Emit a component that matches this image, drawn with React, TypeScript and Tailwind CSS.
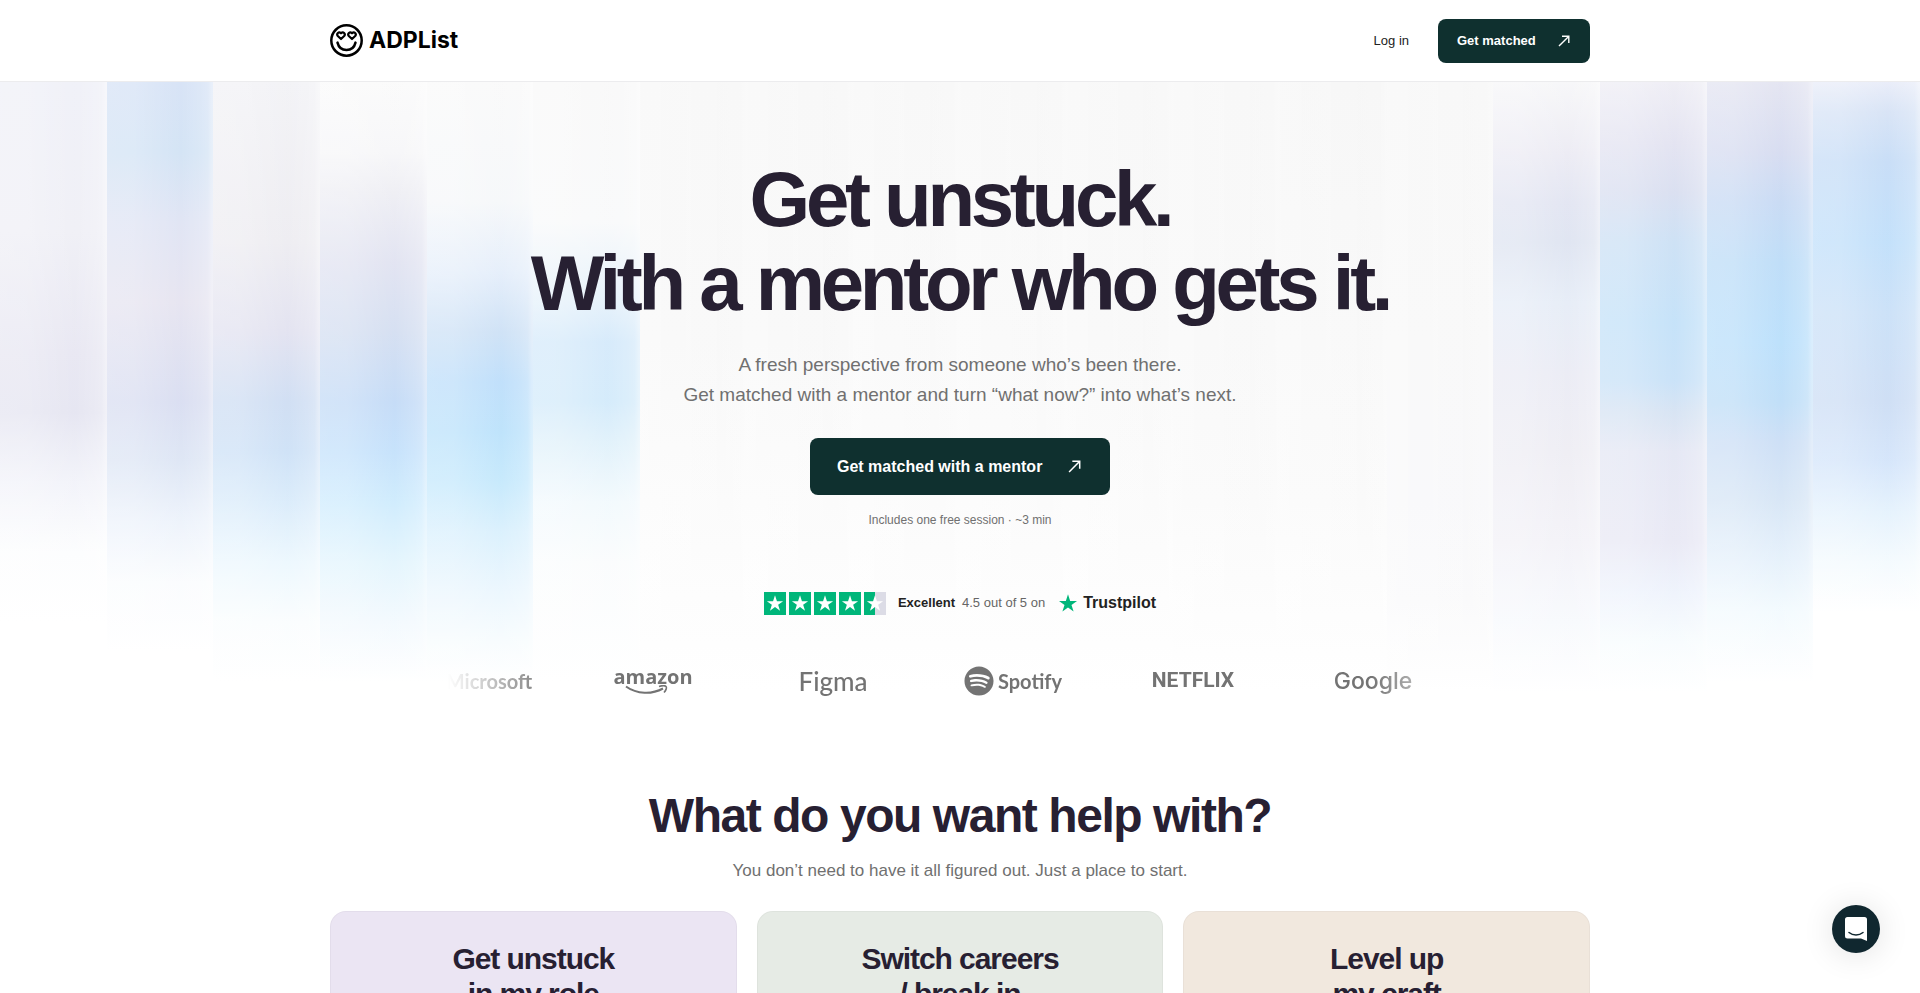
import React from "react";
import { FaSpotify } from "react-icons/fa";
import { clsx } from "clsx";

const STAR_PATH = "M12 1.6l2.6 7.9h8.2l-6.6 4.8 2.5 7.9L12 17.3l-6.7 4.9 2.5-7.9-6.6-4.8h8.2z";

// One gradient per strip, left to right
const strips = [
  "bg-[linear-gradient(to_bottom,#eeeff7_0px,#eeeef5_150px,#e6e5f1_270px,#e3e3f0_330px,#f1f2f9_400px,#fcfdfe_470px,#ffffff_540px)]",
  "bg-[linear-gradient(to_bottom,#d3e0f5_0px,#cfe1f4_70px,#dde2f3_140px,#e4e2ef_220px,#d6dbf0_320px,#dbe4f4_380px,#ecf2fb_440px,#fafcfe_500px,#ffffff_570px)]",
  "bg-[linear-gradient(to_bottom,#f1f1f5_0px,#ecebf0_160px,#e0e0ef_250px,#cbdbf2_320px,#cadff6_370px,#d7eafa_420px,#ebf7fe_480px,#fafdfe_540px,#ffffff_600px)]",
  "bg-[linear-gradient(to_bottom,#fafafa_0px,#f6f6f8_70px,#ededf3_110px,#dfe1f0_180px,#d1dcf0_250px,#bfd8f6_320px,#c0dffb_370px,#cbeafd_420px,#e1f4fd_480px,#f2f9fe_540px,#ffffff_600px)]",
  "bg-[linear-gradient(to_bottom,#f9f9f9_0px,#f5f7f9_120px,#e3edfa_190px,#cadff5_250px,#b9dcfa_300px,#b7e0fb_350px,#c1e7fc_400px,#d7effd_450px,#eaf6fe_510px,#f7fcfe_560px,#ffffff_600px)]",
  "bg-[linear-gradient(to_bottom,#f8f8f8_0px,#f8f9fa_140px,#e3f0fa_220px,#d2e8fa_260px,#d0e9fa_320px,#def0fa_360px,#f1f9fd_420px,#fafcfd_480px,#ffffff_600px)]",
  "bg-[linear-gradient(to_bottom,#f7f7f7_0px,#f8f8f8_260px,#fbfbfb_420px,#ffffff_610px)]",
  "bg-[linear-gradient(to_bottom,#f7f7f7_0px,#f8f8f8_260px,#fbfbfb_420px,#ffffff_610px)]",
  "bg-[linear-gradient(to_bottom,#f7f7f7_0px,#f9f9f9_260px,#fbfbfb_420px,#ffffff_610px)]",
  "bg-[linear-gradient(to_bottom,#f7f7f7_0px,#f9f9f9_260px,#fbfbfb_420px,#ffffff_610px)]",
  "bg-[linear-gradient(to_bottom,#f7f7f7_0px,#f8f8f8_260px,#fbfbfb_420px,#ffffff_610px)]",
  "bg-[linear-gradient(to_bottom,#f7f7f7_0px,#f8f8f8_260px,#fafafa_420px,#ffffff_610px)]",
  "bg-[linear-gradient(to_bottom,#f6f6f6_0px,#f8f8f8_260px,#fafafa_420px,#ffffff_610px)]",
  "bg-[linear-gradient(to_bottom,#f7f7f7_0px,#f8f8f8_260px,#f8f8fa_420px,#fafafb_520px,#ffffff_610px)]",
  "bg-[linear-gradient(to_bottom,#f6f6f8_0px,#ebeaf3_70px,#e0e3f1_120px,#dce2f0_160px,#e4ebf6_220px,#e9eaf4_290px,#edecf3_370px,#f2f1f7_460px,#f7f9fd_540px,#ffffff_610px)]",
  "bg-[linear-gradient(to_bottom,#edecf4_0px,#e1e1f0_60px,#d6dcef_110px,#c8def4_160px,#bfdff8_240px,#c4dff7_300px,#d3e1f2_330px,#e2e5f3_370px,#e7e7f4_460px,#edf2fc_510px,#f7fcfe_560px,#ffffff_610px)]",
  "bg-[linear-gradient(to_bottom,#e1e2f0_0px,#d3d9ef_70px,#c3d7f3_120px,#b8daf7_180px,#b5ddfb_260px,#b9dbf7_320px,#c8dcf5_360px,#d4e4f5_420px,#e4f0fb_480px,#f2fafe_530px,#ffffff_600px)]",
  "bg-[linear-gradient(to_bottom,#e7ebf8_0px,#d4e1f5_30px,#c2daf6_80px,#bcddfa_160px,#c6def7_230px,#c9dbf4_320px,#d1e3fa_380px,#e3f1fd_430px,#f3fafe_480px,#ffffff_530px)]",
];

const brands = [
  { name: "Microsoft", mark: <span className="pl-8 font-['Lato',sans-serif] text-xl font-bold">Microsoft</span> },
  {
    name: "amazon",
    mark: (
      <span className="relative pb-2 font-['Open_Sans',sans-serif] text-xl leading-5 font-bold">
        amazon
        <svg className="absolute bottom-0 left-3 h-[10px] w-11" viewBox="0 0 44 10" fill="none" stroke="currentColor">
          <path d="M1 1.500c11 8 26 8 37 2" strokeWidth="2" />
          <path d="M34 1.500c3-1 6-1 7 0s0 4-2 6" strokeWidth="1.600" />
        </svg>
      </span>
    ),
  },
  { name: "Figma", mark: <span className="font-['Lato',sans-serif] text-[26px] font-medium">Figma</span> },
  {
    name: "Spotify",
    mark: (
      <span className="flex items-center gap-1 font-['Lato',sans-serif] text-xl font-bold">
        <FaSpotify size={30} />
        Spotify
      </span>
    ),
  },
  { name: "Netflix", mark: <span className="font-['Roboto',sans-serif] text-[21px] font-bold">NETFLIX</span> },
  { name: "Google", mark: <span className="font-['Inter',sans-serif] text-[23px] font-medium">Google</span> },
];

const goals = [
  { lines: ["Get unstuck", "in my role"], color: "bg-[#ebe5f3]" },
  { lines: ["Switch careers", "/ break in"], color: "bg-[#e6ebe5]" },
  { lines: ["Level up", "my craft"], color: "bg-[#f1e8de]" },
];

function Arrow({ className }: { className: string }) {
  return (
    <svg className={className} viewBox="0 0 12 12" fill="none" stroke="currentColor" strokeWidth="1.4">
      <path d="M1 11L10.600 1.400M4 1.200h6.800v6.800" />
    </svg>
  );
}

function Logo() {
  return (
    <a href="/" className="flex items-center gap-1.5 text-black">
      <svg className="size-[33px]" viewBox="0 0 33 33" fill="none" stroke="currentColor" strokeLinecap="round" strokeLinejoin="round">
        <circle cx="16.5" cy="16.5" r="15.2" strokeWidth="2.500" />
        <path d="M7.500 18.600c1.200 5 4.800 7.400 9 7.400s7.800-2.400 9-7.400" strokeWidth="2.500" />
        <path d="M11 15L7.800 12c-1.700-2 .9-4.900 3.200-2.700 2.300-2.200 4.900.7 3.200 2.700z" strokeWidth="2.200" />
        <path d="M22 15L18.800 12c-1.700-2 .9-4.900 3.200-2.700 2.300-2.200 4.900.7 3.200 2.700z" strokeWidth="2.200" />
      </svg>
      <span className="font-['Inter',sans-serif] text-[23px] font-bold">ADPList</span>
    </a>
  );
}

function Header() {
  return (
    <header className="border-b border-[#ececee] bg-white">
      <div className="mx-auto flex h-[81px] max-w-[1260px] items-center justify-between">
        <Logo />
        <div className="flex items-center gap-[29px] text-[13px]">
          <a href="/login" className="text-[#222]">Log in</a>
          <button className="flex h-11 w-[152px] items-center justify-between rounded-lg bg-[#0f302f] pr-5 pl-[19px] font-bold text-white">
            Get matched
            <Arrow className="size-3" />
          </button>
        </div>
      </div>
    </header>
  );
}

function Strips() {
  return (
    <div className="absolute inset-0 grid grid-cols-18 overflow-hidden" aria-hidden="true">
      {strips.map((strip, i) => (
        <div key={i} className={clsx("h-[620px]", strip)}>
          <div
            className={clsx(
              "h-full",
              i > 5 && i < 14
                ? "bg-[linear-gradient(to_right,#ffffff50_0%,#ffffff48_20%,#ffffff30_20%,#ffffff38_48%,#ffffff20_48%,#ffffff20_72%,#ffffff10_72%,#ffffff28_94%,#ffffff50_98%)]"
                : "bg-[linear-gradient(to_right,#ffffff50_0%,#ffffff4c_25%,#ffffff28_58%,#ffffff1c_70%,#ffffff3c_88%,#ffffff50_95%,#ffffff80_99%)]"
            )}
          />
        </div>
      ))}
    </div>
  );
}

function Rating() {
  return (
    <div className="mt-[62px] flex items-center text-[13px]">
      <div className="flex gap-[3px]" role="img" aria-label="4.5 stars">
        {[1, 2, 3, 4, 5].map((n) => (
          <span
            key={n}
            className={clsx(
              "flex h-[23px] w-[22px] items-center justify-center text-white",
              n === 5 ? "bg-[linear-gradient(to_right,#00b67a_50%,#dcdce6_50%)]" : "bg-[#00b67a]"
            )}
          >
            <svg className="size-[18px]" viewBox="0 0 24 24" fill="currentColor">
              <path d={STAR_PATH} />
            </svg>
          </span>
        ))}
      </div>
      <b className="ml-3 text-[#222]">Excellent</b>
      <span className="ml-[7px] text-[#666]">4.5 out of 5 on</span>
      <svg className="ml-[13px] size-5" viewBox="0 0 24 24" fill="#00b67a">
        <path d={STAR_PATH} />
      </svg>
      <b className="ml-[5px] text-base text-[#222]">Trustpilot</b>
    </div>
  );
}

function Hero() {
  return (
    <section className="relative">
      <Strips />
      <div className="relative flex flex-col items-center pt-[75px] text-center">
        <h1 className="text-[78px] leading-[84px] font-bold tracking-[-0.055em] text-[#272032]">
          Get unstuck.
          <br />
          With a mentor who gets it.
        </h1>
        <p className="mt-[25px] text-[19px] leading-[30px] text-[#707070]">
          A fresh perspective from someone who’s been there.
          <br />
          Get matched with a mentor and turn “what now?” into what’s next.
        </p>
        <button className="mt-7 flex h-[57px] w-[300px] items-center justify-between rounded-lg bg-[#0f302f] pr-[29px] pl-[27px] font-bold text-white">
          Get matched with a mentor
          <Arrow className="size-[13px]" />
        </button>
        <p className="mt-4 text-xs leading-[18px] text-[#707070]">Includes one free session · ~3 min</p>
        <Rating />
        <div className="mt-11 flex w-full max-w-[1024px] justify-center overflow-hidden mask-[linear-gradient(to_right,transparent,black_10%,black_90%,transparent)]">
          <ul className="-ml-[74px] flex h-11 shrink-0 text-[#737373]">
            {brands.map((brand) => (
              <li key={brand.name} className="flex w-[180px] items-center justify-center">
                {brand.mark}
              </li>
            ))}
          </ul>
        </div>
      </div>
    </section>
  );
}

function Goals() {
  return (
    <section className="mx-auto max-w-[1260px] pt-[85px] pb-20 text-center">
      <h2 className="text-5xl leading-[56px] font-bold tracking-[-0.03em] text-[#272032]">What do you want help with?</h2>
      <p className="mt-[14px] text-[17px] leading-[26px] text-[#707070]">
        You don’t need to have it all figured out. Just a place to start.
      </p>
      <div className="mt-[27px] grid grid-cols-3 gap-5">
        {goals.map((goal) => (
          <a
            key={goal.lines[0]}
            href="/match"
            className={clsx("min-h-[320px] rounded-2xl border border-black/3 px-6 pt-[29px]", goal.color)}
          >
            <h3 className="text-3xl leading-[35px] font-bold tracking-[-0.035em] text-[#272032]">
              {goal.lines[0]}
              <br />
              {goal.lines[1]}
            </h3>
          </a>
        ))}
      </div>
    </section>
  );
}

function ChatLauncher() {
  return (
    <button
      aria-label="Open chat"
      className="fixed right-10 bottom-10 flex size-12 items-center justify-center rounded-full bg-[#10272f] text-white shadow-[0_2px_32px_rgba(0,0,0,0.12)]"
    >
      <svg className="h-6 w-[22px]" viewBox="0 0 22 24">
        <path d="M2.500 0h17A2.500 2.500 0 0 1 22 2.500V24l-6-2.500H2.500A2.500 2.500 0 0 1 0 19V2.500A2.500 2.500 0 0 1 2.500 0z" fill="currentColor" />
        <path d="M4 15.500c4 3.200 10 3.200 14 0" fill="none" stroke="#10272f" strokeWidth="1.500" strokeLinecap="round" />
      </svg>
    </button>
  );
}

export default function App() {
  return (
    <div className="bg-white font-['Liberation_Sans',Arial,sans-serif]">
      <Header />
      <main>
        <Hero />
        <Goals />
      </main>
      <ChatLauncher />
    </div>
  );
}
